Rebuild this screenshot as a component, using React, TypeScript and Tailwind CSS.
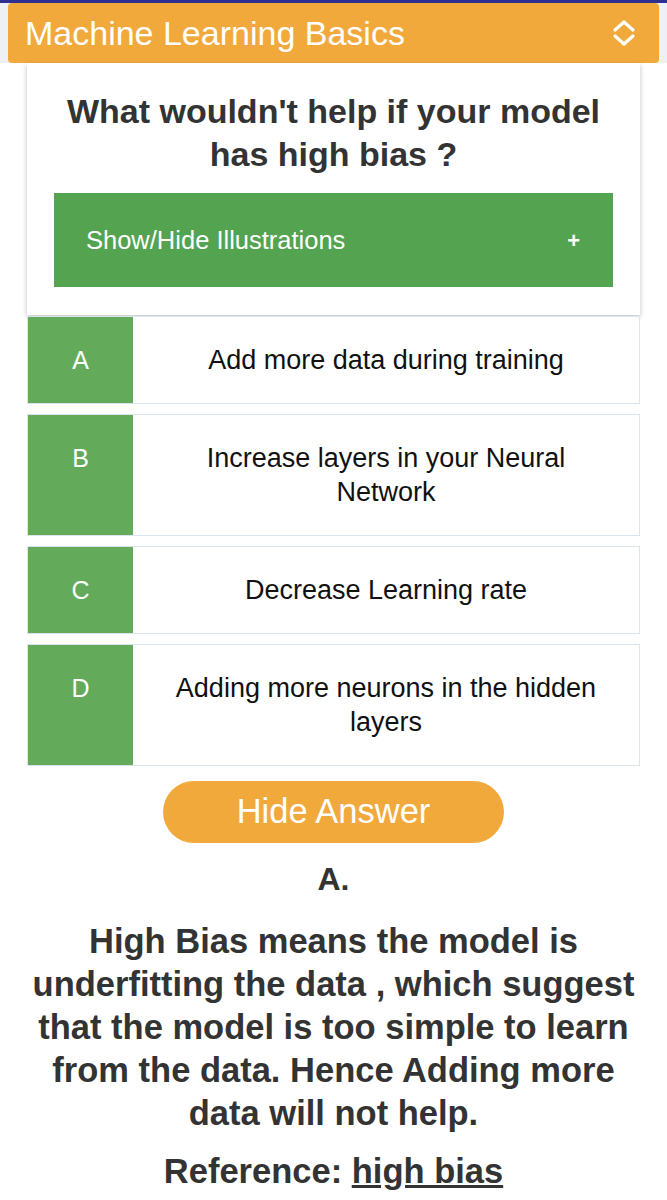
import React from "react";

const options = [
  { key: "A", text: "Add more data during training" },
  { key: "B", text: "Increase layers in your Neural Network" },
  { key: "C", text: "Decrease Learning rate" },
  { key: "D", text: "Adding more neurons in the hidden layers" },
];

const UpDownIcon = () => (
  <svg width="26" height="30" viewBox="0 0 26 30" fill="none">
    <path d="M4 12 L13 4 L22 12" stroke="white" strokeWidth="3.2" strokeLinecap="round" strokeLinejoin="round" />
    <path d="M4 18 L13 26 L22 18" stroke="white" strokeWidth="3.2" strokeLinecap="round" strokeLinejoin="round" />
  </svg>
);

export default function App() {
  return (
    <div className="min-h-screen bg-white font-['Liberation_Sans',Arial,sans-serif]">
      <div className="h-[3px] bg-[#2d3090]" />
      <div className="bg-[#eef0f3] px-[8px]">
        <div className="flex h-[60px] items-center justify-between rounded-[4px] bg-[#f2a93b] pl-[17px] pr-[22px]">
          <span className="text-[34px] leading-none text-white">Machine Learning Basics</span>
          <UpDownIcon />
        </div>
      </div>

      <div className="px-[27px]">
        <div className="bg-white px-[27px] pb-[28px] pt-[27px] shadow-[0_2px_5px_rgba(0,0,0,0.25)]">
          <h1 className="text-center text-[34px] font-bold leading-[43px] text-[#333]">
            What wouldn't help if your model has high bias ?
          </h1>
          <div className="mt-[17px] flex h-[94px] items-center justify-between bg-[#53a350] pl-[32px] pr-[33px] text-white">
            <span className="text-[25.5px]">Show/Hide Illustrations</span>
            <span className="text-[22px] font-bold">+</span>
          </div>
        </div>

        <div className="mt-px flex flex-col gap-[10px]">
          {options.map((o) => (
            <div key={o.key} className="flex border border-[#dbe5ef] bg-white">
              <div className="w-[105px] shrink-0 bg-[#64aa5b] py-[26px] text-center text-[25px] leading-[34px] text-white">
                {o.key}
              </div>
              <div className="flex-1 px-[30px] py-[26px] text-center text-[27px] leading-[34px] text-[#111]">
                {o.text}
              </div>
            </div>
          ))}
        </div>
      </div>

      <div className="mt-[15px] flex justify-center">
        <button className="h-[62px] w-[341px] rounded-full bg-[#f2a93b] text-[34.5px] text-white">
          Hide Answer
        </button>
      </div>

      <div className="mt-[15px] text-center text-[32px] font-bold leading-[43px] text-[#333]">A.</div>

      <p className="mt-[19px] px-[20px] text-center text-[34.5px] font-bold leading-[43px] text-[#333]">
        High Bias means the model is underfitting the data , which suggest that the model is too simple to learn from the data. Hence Adding more data will not help.
      </p>

      <p className="mt-[15px] text-center text-[34.5px] font-bold leading-[43px] text-[#333]">
        Reference: <span className="underline">high bias</span>
      </p>
    </div>
  );
}
